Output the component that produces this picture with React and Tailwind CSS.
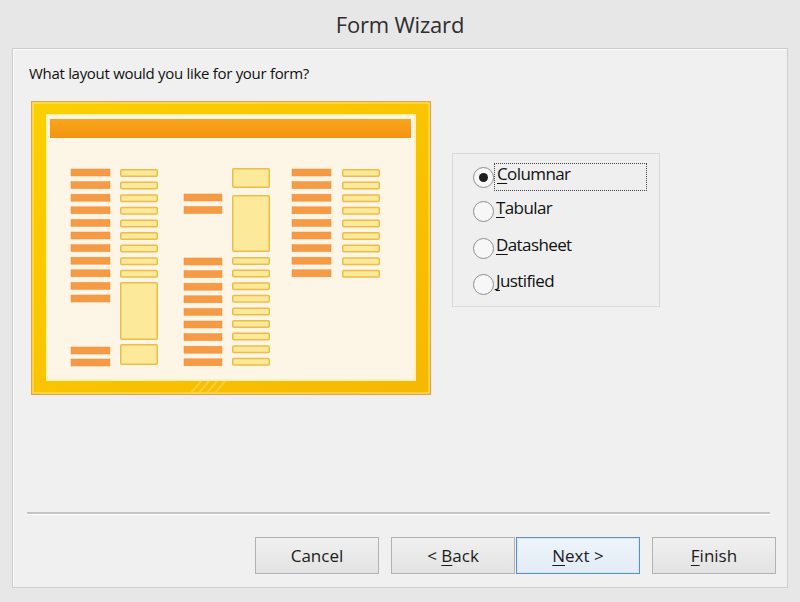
import React from "react";

const ROW = 12.6;
const rows = (start, n) => Array.from({ length: n }, (_, i) => start + i * ROW);

// orange filled bar
const Bar = ({ x, y, w = 39 }) => (
  <rect x={x} y={y} width={w} height={7} fill="#f59a45" stroke="#ef9040" strokeWidth="0.5" />
);

// yellow outlined field box
const Box = ({ x, y, w = 38, h = 8 }) => (
  <rect x={x + 0.75} y={y + 0.75} width={w - 1.5} height={h - 1.5} rx="1" fill="#fde99a" stroke="#ecbd48" strokeWidth="1.5" />
);

const LayoutPreview = () => (
  <svg width="400" height="294" viewBox="0 0 400 294" className="block shrink-0">
    <defs>
      <linearGradient id="band" x1="0" y1="0" x2="1" y2="1">
        <stop offset="0" stopColor="#fcd000" />
        <stop offset="1" stopColor="#f6b800" />
      </linearGradient>
      <linearGradient id="head" x1="0" y1="0" x2="0" y2="1">
        <stop offset="0" stopColor="#f9a51c" />
        <stop offset="1" stopColor="#f39412" />
      </linearGradient>
    </defs>
    <rect x="0.5" y="0.5" width="399" height="293" fill="url(#band)" stroke="#dfa45a" />
    <rect x="2" y="2" width="396" height="290" fill="none" stroke="#fde47a" strokeWidth="1" />
    {/* faint stripes in the band */}
    <g stroke="#fbd65a" strokeWidth="2" opacity="0.6">
      <line x1="160" y1="292" x2="170" y2="280" />
      <line x1="168" y1="292" x2="178" y2="280" />
      <line x1="176" y1="292" x2="186" y2="280" />
      <line x1="184" y1="292" x2="194" y2="280" />
    </g>
    <rect x="16" y="14" width="368" height="265" fill="#fdf5e5" stroke="#fff2b8" strokeWidth="2" />
    <rect x="19" y="18" width="361" height="19" fill="url(#head)" />

    {rows(68, 11).map((y) => <Bar key={"a" + y} x={40} y={y} />)}
    <Bar x={40} y={246} />
    <Bar x={40} y={258} />

    {rows(68, 9).map((y) => <Box key={"b" + y} x={89} y={y} />)}
    <Box x={89} y={181} h={58} />
    <Box x={89} y={243} h={21} />

    <Bar x={153} y={93} w={38} />
    <Bar x={153} y={105.5} w={38} />
    {rows(157, 9).map((y) => <Bar key={"c" + y} x={153} y={y} w={38} />)}

    <Box x={201} y={67} h={20} />
    <Box x={201} y={94} h={57} />
    {rows(156, 9).map((y) => <Box key={"d" + y} x={201} y={y} />)}

    {rows(68, 9).map((y) => <Bar key={"e" + y} x={261} y={y} />)}
    {rows(68, 9).map((y) => <Box key={"f" + y} x={311} y={y} />)}
  </svg>
);

const Radio = ({ checked, label, focused, mt }) => (
  <div className={`flex items-center ${mt}`}>
    <span className="w-[21px] h-[21px] rounded-full border border-[#8e8e8e] bg-[#f7f7f7] flex items-center justify-center shrink-0">
      {checked && <span className="w-[9px] h-[9px] rounded-full bg-[#1e1e1e]"></span>}
    </span>
    <span
      className={`h-[28px] flex items-center pl-[2px] pb-[6px] ${
        focused ? "w-[153px] border border-dotted border-[#444]" : ""
      }`}
    >
      <span>
        <span className="underline underline-offset-[3px]">{label[0]}</span>
        {label.slice(1)}
      </span>
    </span>
  </div>
);

const Button = ({ children, primary, className = "" }) => (
  <button
    className={`w-[124px] h-[37px] text-[17px] text-[#1b1b1b] ${
      primary
        ? "border border-[#5d8fc4] bg-gradient-to-b from-[#eef4fb] to-[#e2ecf6] shadow-[inset_0_0_0_1px_#d6e6f6]"
        : "border border-[#b2b2b2] bg-gradient-to-b from-[#f0f0f0] to-[#e3e3e3]"
    } ${className}`}
  >
    {children}
  </button>
);

const U = ({ children }) => <span className="underline underline-offset-[3px]">{children}</span>;

export default function App() {
  return (
    <div
      className="w-[800px] h-[602px] bg-[#e7e7e7] flex flex-col text-[#111]"
      style={{ fontFamily: '"Open Sans", "Noto Sans", sans-serif' }}
    >
      <div className="h-[48px] flex items-center justify-center text-[22px] text-[#2e2e2e] tracking-[-0.2px]">
        Form Wizard
      </div>

      <div className="mx-[12px] h-[540px] border border-[#cdcdcd] bg-[#f0f0f0] shadow-[inset_1px_1px_0_#fafafa] flex flex-col">
        <p className="pl-[16px] pt-[14px] text-[15px] leading-[20px] tracking-[-0.3px]">
          What layout would you like for your form?
        </p>

        <div className="flex mt-[18px]">
          <div className="ml-[18px]">
            <LayoutPreview />
          </div>
          <div className="ml-[21px] mt-[52px] w-[208px] h-[154px] border border-[#d9d9d9] bg-[#efefef] pl-[20px] text-[17px] tracking-[-0.6px]">
            <Radio checked focused label="Columnar" mt="mt-[9px]" />
            <Radio label="Tabular" mt="mt-[6px]" />
            <Radio label="Datasheet" mt="mt-[9px]" />
            <Radio label="Justified" mt="mt-[8px]" />
          </div>
        </div>

        <div className="mt-[117px] ml-[14px] mr-[17px] h-[3px] border-t-2 border-[#c4c4c4] border-b border-b-white"></div>

        <div className="mt-[22px] flex justify-end pr-[11px]">
          <Button>Cancel</Button>
          <Button className="ml-[12px]">
            &lt; <U>B</U>ack
          </Button>
          <Button primary className="ml-[1px]">
            <U>N</U>ext &gt;
          </Button>
          <Button className="ml-[12px]">
            <U>F</U>inish
          </Button>
        </div>
      </div>
    </div>
  );
}
